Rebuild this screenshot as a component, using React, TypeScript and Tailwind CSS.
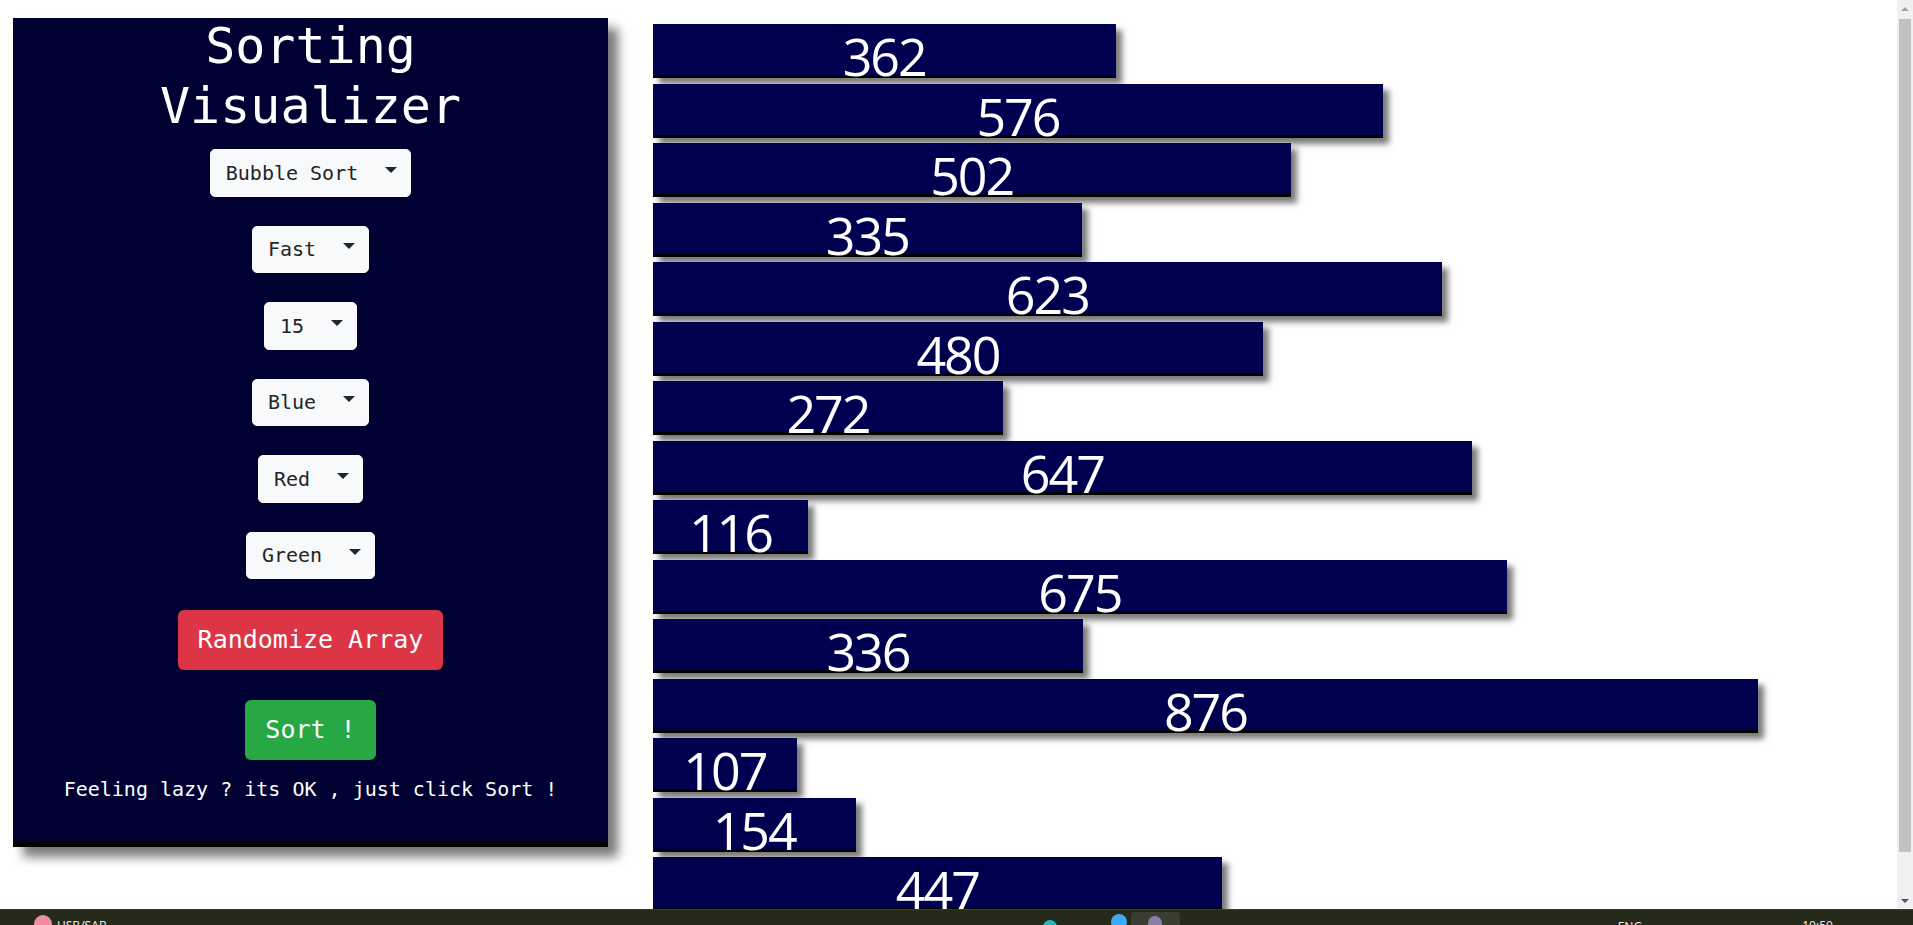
import React from "react";

const bars = [362, 576, 502, 335, 623, 480, 272, 647, 116, 675, 336, 876, 107, 154, 447];

const mono = { fontFamily: '"DejaVu Sans Mono", "Liberation Mono", monospace' };

function Dropdown({ label }: { label: string }) {
  return (
    <div className="flex h-[47.5px] items-center rounded-[5px] border border-[#f8f9fa] bg-[#f8f9fa] pl-[15px] pr-[13px] text-[20px] leading-[30px] text-[#212529]">
      <span className="whitespace-pre">{label}</span>
      <span className="ml-[27px] mb-[6px] inline-block h-0 w-0 border-x-[6px] border-t-[6px] border-x-transparent border-t-[#212529]" />
    </div>
  );
}

export default function App() {
  return (
    <div className="flex h-[925px] w-[1913px] flex-col overflow-hidden bg-white">
      <div className="flex h-[909px] w-full overflow-hidden">
        <div className="flex flex-1 items-start overflow-hidden">
          {/* Control panel */}
          <div
            className="ml-[13px] mt-[18px] flex w-[595px] shrink-0 flex-col items-center border-b-[5px] border-black bg-[#000033] pb-[38px] text-white shadow-[10px_10px_10px_#7a7a7a]"
            style={mono}
          >
            <h1 className="mt-[-2px] mb-[13px] text-center text-[50px] font-normal leading-[60px]">
              Sorting
              <br />
              Visualizer
            </h1>
            <div className="flex flex-col items-center gap-[29px]">
              <Dropdown label="Bubble Sort" />
              <Dropdown label="Fast" />
              <Dropdown label="15" />
              <Dropdown label="Blue" />
              <Dropdown label="Red" />
              <Dropdown label="Green" />
            </div>
            <button className="mt-[30.5px] h-[60px] rounded-[6px] bg-[#dc3545] px-[20px] text-[25px] leading-[37.5px] text-white">
              Randomize Array
            </button>
            <button className="mt-[30px] h-[60px] rounded-[6px] bg-[#28a745] px-[20px] text-[25px] leading-[37.5px] text-white">
              Sort !
            </button>
            <p className="mt-[14px] text-[20px] leading-[30px] whitespace-pre">Feeling lazy ? its OK , just click Sort !</p>
          </div>

          {/* Bars */}
          <div className="ml-[45px] mt-[24.4px] flex shrink-0 flex-col gap-[5.5px]">
            {bars.map((v, i) => (
              <div
                key={i}
                className="h-[54px] shrink-0 border-b-[3px] border-black bg-[#000050] text-center text-white shadow-[6px_6px_6px_#7a7a7a]"
                style={{ width: v * 1.25 + 10 }}
              >
                <div
                  className="pt-[6px] text-[52px] leading-[51px] tracking-[-2px]"
                  style={{ fontFamily: '"Open Sans", "Noto Sans", sans-serif' }}
                >
                  {v}
                </div>
              </div>
            ))}
          </div>
        </div>

        {/* Scrollbar */}
        <div className="flex w-[16px] shrink-0 flex-col items-center bg-[#f0f0f0]">
          <div className="flex h-[17px] w-full items-center justify-center">
            <span className="inline-block h-0 w-0 border-x-[4px] border-b-[4px] border-x-transparent border-b-[#a3a3a3]" />
          </div>
          <div className="mt-[2px] h-[833px] w-[12px] bg-[#c1c1c1]" />
          <div className="flex-1" />
          <div className="flex h-[17px] w-full items-center justify-center">
            <span className="inline-block h-0 w-0 border-x-[4px] border-t-[4px] border-x-transparent border-t-[#505050]" />
          </div>
        </div>
      </div>

      {/* Taskbar strip (only its top edge is on screen) */}
      <div
        className="flex h-[16px] w-full items-start overflow-hidden border-t border-[#3a3f2c] bg-[#252a1b] text-[12px] leading-[14px] text-[#e8e8e8]"
        style={{ fontFamily: '"Noto Sans", sans-serif' }}
      >
        <span className="ml-[34px] mt-[5px] inline-block h-[18px] w-[18px] shrink-0 rounded-full bg-[#f08ca0]" />
        <span className="ml-[5px] mt-[9px] shrink-0">USB/SAB</span>
        <span className="ml-[936px] mt-[10px] inline-block h-[14px] w-[14px] shrink-0 rounded-full bg-[#27b5c4]" />
        <span className="ml-[54px] mt-[4px] inline-block h-[16px] w-[16px] shrink-0 rounded-full bg-[#3fa9f5]" />
        <span className="ml-[4px] mt-[2px] flex h-[20px] w-[49px] shrink-0 items-start justify-center rounded-[3px] bg-[#3a3e32]">
          <span className="mt-[4px] inline-block h-[14px] w-[14px] rounded-full bg-[#8a7fa0]" />
        </span>
        <span className="ml-[438px] mt-[10px] shrink-0">ENG</span>
        <span className="ml-[160px] mt-[9px] shrink-0">10:50</span>
      </div>
    </div>
  );
}
